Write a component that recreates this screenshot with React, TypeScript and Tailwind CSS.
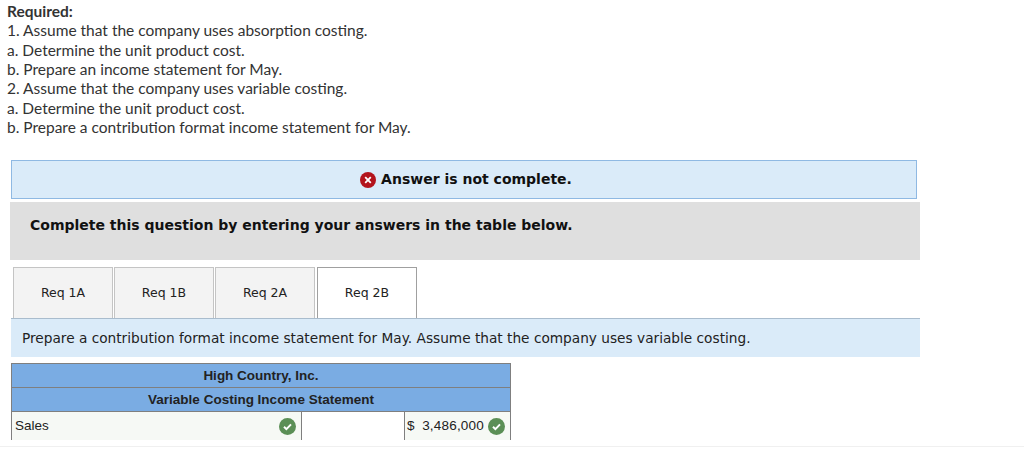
import React from "react";

const tabs = ["Req 1A", "Req 1B", "Req 2A"];

const lines = [
  "1. Assume that the company uses absorption costing.",
  "a. Determine the unit product cost.",
  "b. Prepare an income statement for May.",
  "2. Assume that the company uses variable costing.",
  "a. Determine the unit product cost.",
  "b. Prepare a contribution format income statement for May.",
];

function Check() {
  return (
    <svg width="17" height="17" viewBox="0 0 17 17" className="shrink-0">
      <circle cx="8.5" cy="8.5" r="8.5" fill="#5b8f56" />
      <path d="M5 8.8l2.4 2.3L12 6.4" fill="none" stroke="#fff" strokeWidth="2" />
    </svg>
  );
}

export default function App() {
  return (
    <div className="h-[453px] w-[1024px] overflow-hidden bg-white">
      <div className="pl-[7px] pt-[2px] font-['Lato',sans-serif] text-[15.5px] leading-[19.35px] text-[#333]">
        <p className="font-bold">Required:</p>
        {lines.map((l, i) => (
          <p key={i}>{l}</p>
        ))}
      </div>

      <div className="ml-[11px] mt-[23px] flex h-[39px] w-[906px] items-center justify-center border border-[#8fb9e3] bg-[#daebf9] pl-[4px] font-['DejaVu_Sans',sans-serif] text-[14px] font-bold text-[#111]">
        <svg width="16" height="16" viewBox="0 0 16 16" className="mr-[5px] shrink-0">
          <circle cx="8" cy="8" r="8" fill="#b3141d" />
          <path d="M5.2 5.2l5.6 5.6M10.8 5.2l-5.6 5.6" stroke="#fff" strokeWidth="1.8" />
        </svg>
        Answer is not complete.
      </div>

      <div className="ml-[10px] mt-[3px] flex h-[58px] w-[910px] items-start bg-[#dfdfdf] pl-[20px] pt-[14px] font-['DejaVu_Sans',sans-serif] text-[14px] font-bold leading-[19px] text-[#111]">
        Complete this question by entering your answers in the table below.
      </div>

      <div className="ml-[13px] mt-[7px] flex h-[51px] gap-[1px] font-['DejaVu_Sans',sans-serif] text-[12.5px] text-[#222]">
        {tabs.map((t) => (
          <div key={t} className="flex w-[100px] items-center justify-center border border-b-0 border-[#c4c4c4] bg-[#f3f3f3]">
            {t}
          </div>
        ))}
        <div className="ml-[1px] flex w-[100px] items-center justify-center border border-b-0 border-[#a0a0a0] bg-white">
          Req 2B
        </div>
      </div>

      <div className="ml-[11px] flex h-[39px] w-[909px] items-center border-t border-[#a9bccd] bg-[#daebf9] pl-[11px] font-['DejaVu_Sans',sans-serif] text-[13.7px] text-[#222]">
        Prepare a contribution format income statement for May. Assume that the company uses variable costing.
      </div>

      <div className="ml-[11px] mt-[6px] w-[500px] border-x border-t border-[#7f7f7f] font-['Liberation_Sans',sans-serif] text-[13.5px] text-[#222]">
        <div className="flex h-[24px] items-center justify-center border-b border-[#7f7f7f] bg-[#7aace3] font-bold">
          High Country, Inc.
        </div>
        <div className="flex h-[24px] items-center justify-center border-b border-[#7f7f7f] bg-[#7aace3] font-bold">
          Variable Costing Income Statement
        </div>
        <div className="flex h-[28px]">
          <div className="flex w-[289px] items-center justify-between bg-[#f6f9f5] pl-[3px] pr-[5px]">
            Sales
            <Check />
          </div>
          <div className="w-[104px] border-x border-[#7f7f7f] bg-white"></div>
          <div className="flex flex-1 items-center justify-between bg-[#f6f9f5] pl-[2px] pr-[5px] tracking-[0.2px]">
            <span>$</span>
            <span className="ml-auto mr-[4px]">3,486,000</span>
            <Check />
          </div>
        </div>
      </div>

      <div className="mt-[6px] h-[1px] w-full bg-[#f0f0f0]"></div>
    </div>
  );
}
